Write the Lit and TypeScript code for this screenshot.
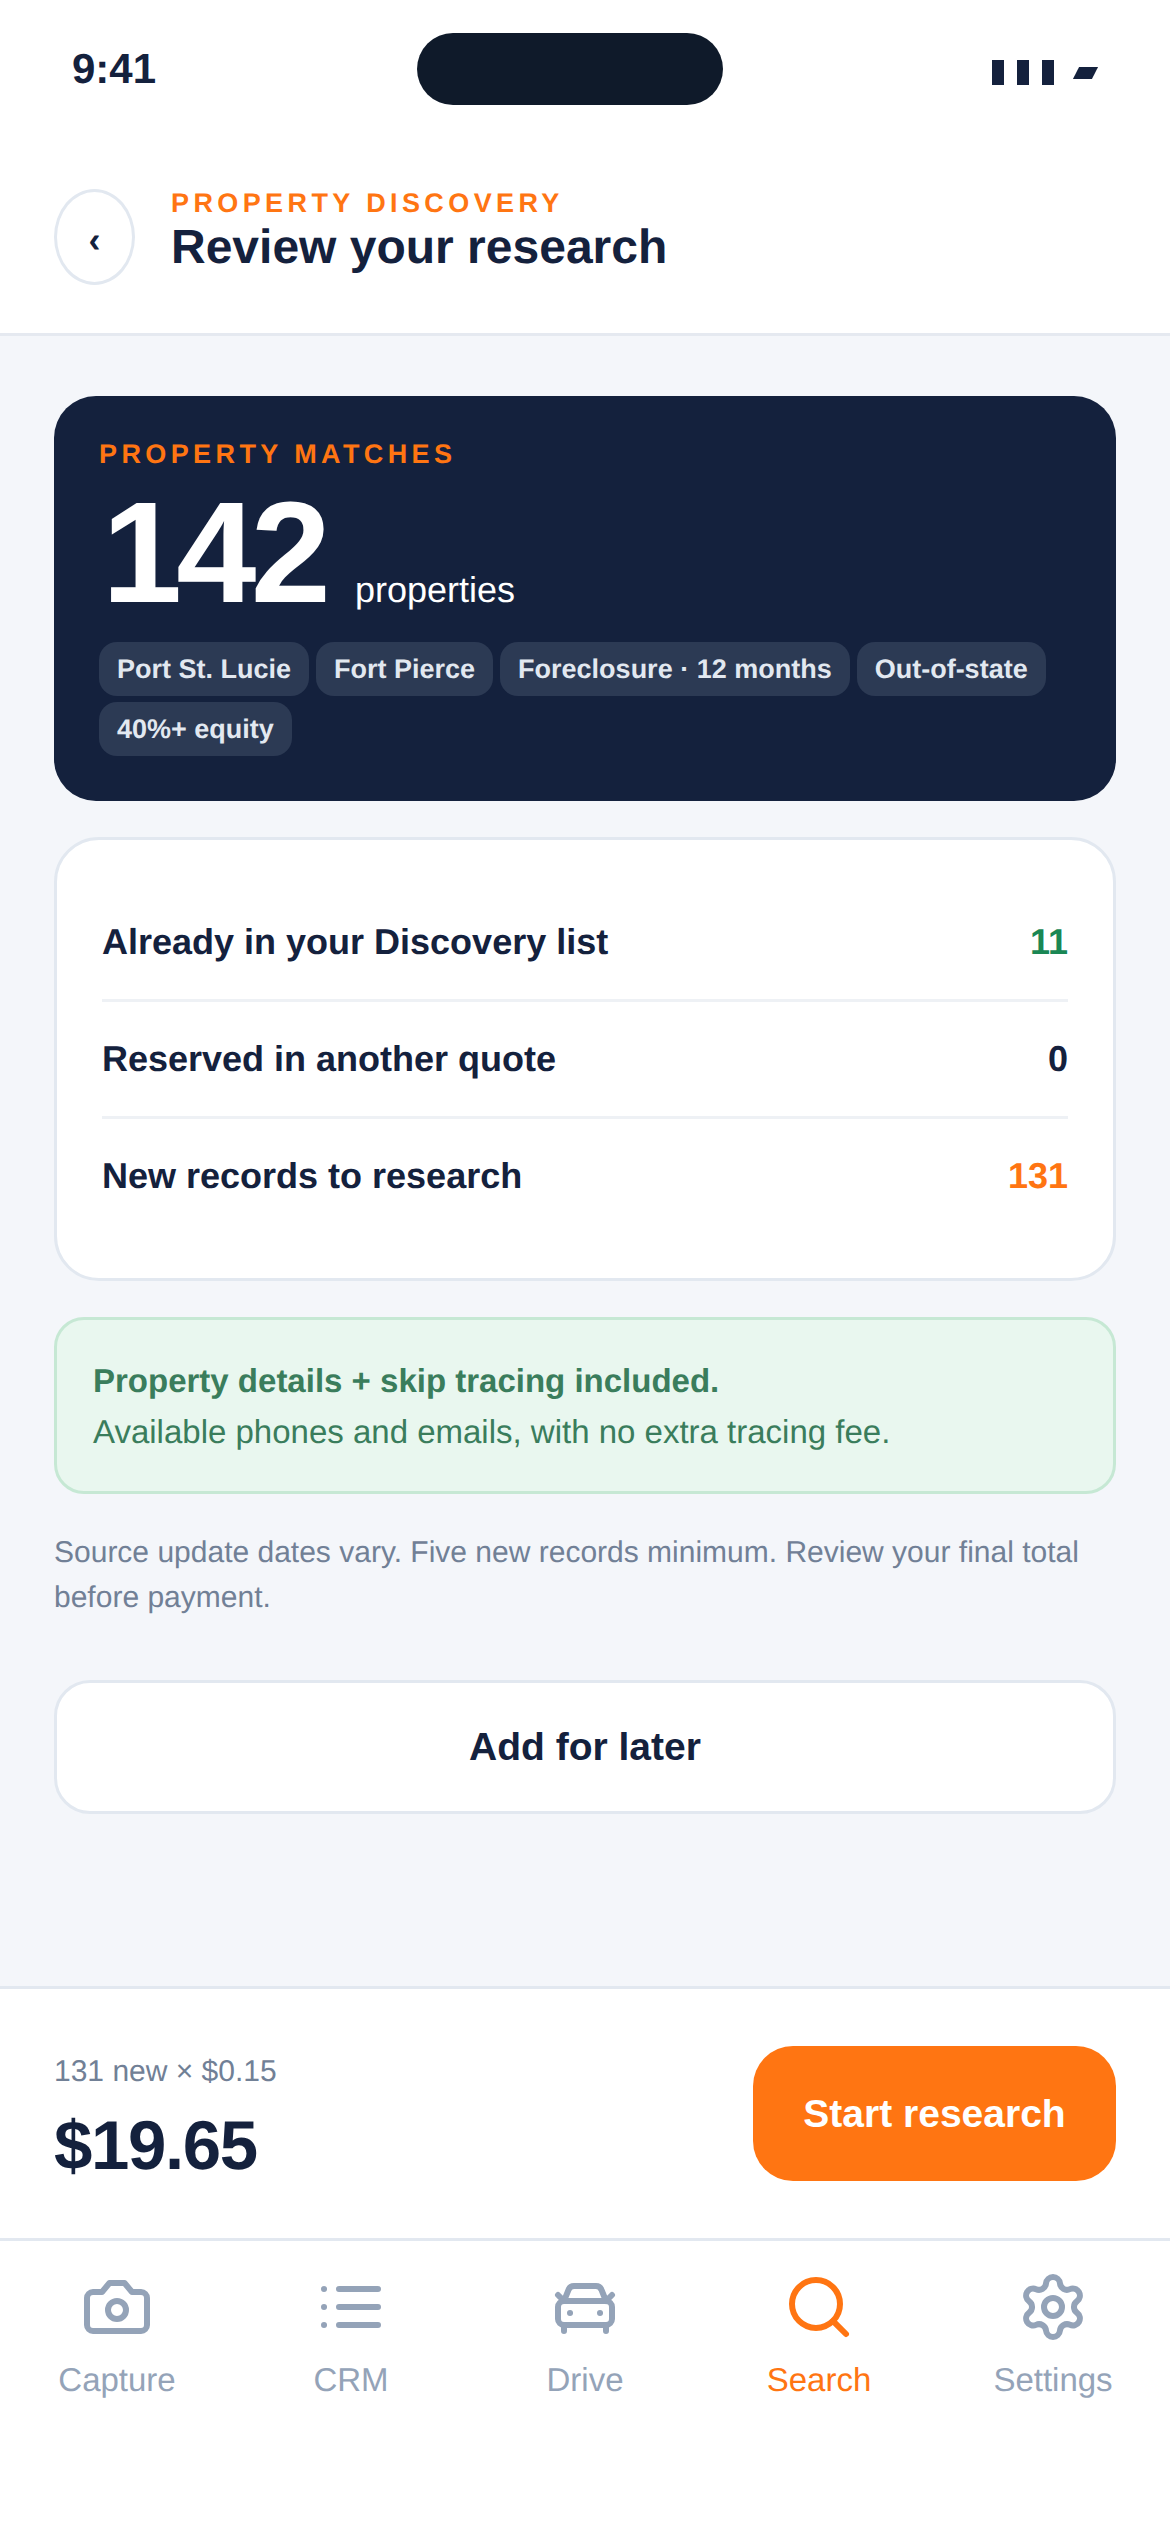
import { LitElement, html, css, svg } from 'lit';
import { customElement } from 'lit/decorators.js';

const chips = ['Port St. Lucie', 'Fort Pierce', 'Foreclosure · 12 months', 'Out-of-state', '40%+ equity'];

const stats = [
  { label: 'Already in your Discovery list', value: '11', tone: 'green' },
  { label: 'Reserved in another quote', value: '0', tone: '' },
  { label: 'New records to research', value: '131', tone: 'orange' },
];

const tabs = [
  {
    label: 'Capture',
    icon: svg`<path d="M14.5 4h-5L7 7H4a2 2 0 0 0-2 2v9a2 2 0 0 0 2 2h16a2 2 0 0 0 2-2V9a2 2 0 0 0-2-2h-3l-2.5-3z"/><circle cx="12" cy="13" r="3"/>`,
  },
  {
    label: 'CRM',
    icon: svg`<path d="M3 6h.01M8 6h13M3 12h.01M8 12h13M3 18h.01M8 18h13"/>`,
  },
  {
    label: 'Drive',
    icon: svg`<path d="m21 8-2 2-1.5-3.7A2 2 0 0 0 15.646 5H8.4a2 2 0 0 0-1.903 1.257L5 10 3 8"/><path d="M7 14h.01M17 14h.01"/><rect width="18" height="8" x="3" y="10" rx="2"/><path d="M5 18v2M19 18v2"/>`,
  },
  {
    label: 'Search',
    active: true,
    icon: svg`<circle cx="11" cy="11" r="8"/><path d="m21 21-4.3-4.3"/>`,
  },
  {
    label: 'Settings',
    icon: svg`<path d="M9.671 4.136a2.34 2.34 0 0 1 4.659 0 2.34 2.34 0 0 0 3.319 1.915 2.34 2.34 0 0 1 2.33 4.033 2.34 2.34 0 0 0 0 3.831 2.34 2.34 0 0 1-2.33 4.033 2.34 2.34 0 0 0-3.319 1.915 2.34 2.34 0 0 1-4.659 0 2.34 2.34 0 0 0-3.32-1.915 2.34 2.34 0 0 1-2.33-4.033 2.34 2.34 0 0 0 0-3.831A2.34 2.34 0 0 1 6.35 6.051a2.34 2.34 0 0 0 3.319-1.915"/><circle cx="12" cy="12" r="3"/>`,
  },
];

@customElement('app-root')
export class AppRoot extends LitElement {
  static styles = css`
    :host {
      display: block;
      font-family: 'Liberation Sans', Arial, sans-serif;
      color: #14213d;
      text-rendering: geometricPrecision;
    }

    .screen {
      display: flex;
      flex-direction: column;
      min-height: 2532px;
      background: #fff;
    }

    .status {
      height: 105px;
      padding: 33px 72px 0;
      box-sizing: border-box;
      display: flex;
      justify-content: space-between;
      align-items: flex-start;
    }

    .time {
      font-size: 42px;
      font-weight: 700;
      line-height: 72px;
    }

    .island {
      width: 306px;
      height: 72px;
      border-radius: 36px;
      background: #0f1a2a;
    }

    .signal {
      display: flex;
      align-items: center;
      justify-content: flex-end;
      gap: 13px;
      width: 111px;
      height: 79px;
      margin-right: 3px;
    }

    .signal i {
      width: 12px;
      height: 25px;
      background: #14213d;
    }

    .signal i.batt {
      width: 19px;
      height: 12px;
      margin-left: 9px;
      transform: skewX(-27deg);
    }

    .head {
      display: flex;
      align-items: center;
      gap: 36px;
      padding: 84px 54px 48px;
      height: 231px;
      box-sizing: border-box;
      border-bottom: 3px solid #e5e9f0;
    }

    .back {
      width: 81px;
      height: 96px;
      box-sizing: border-box;
      border: 3px solid #e2e8f0;
      border-radius: 50%;
      display: flex;
      align-items: center;
      justify-content: center;
      font-size: 36px;
      font-weight: 700;
      line-height: 1;
      padding-top: 6px;
      background: #fff;
    }

    .head-text {
      margin-bottom: 12px;
    }

    .eyebrow {
      font-size: 27px;
      font-weight: 700;
      letter-spacing: 4.4px;
      color: #ff7512;
      line-height: 33px;
    }

    .title {
      font-size: 48px;
      font-weight: 700;
      line-height: 54px;
      margin-top: 1px;
    }

    .main {
      flex: 1;
      background: #f4f6fa;
      padding: 60px 54px;
      display: flex;
      flex-direction: column;
      gap: 36px;
    }

    .hero {
      background: #14213d;
      border-radius: 42px;
      padding: 42px 45px 45px;
    }

    .count {
      display: flex;
      align-items: baseline;
      gap: 30px;
      color: #fff;
      margin: 16px 0 0 3px;
    }

    .num {
      font-size: 144px;
      font-weight: 700;
      line-height: 132px;
      letter-spacing: -5.76px;
    }

    .unit {
      font-size: 36px;
    }

    .chips {
      display: flex;
      flex-wrap: wrap;
      gap: 6px 7px;
      margin-top: 23px;
    }

    .chip {
      background: #2c3a54;
      color: #e2e8f0;
      font-size: 27px;
      font-weight: 700;
      line-height: 54px;
      padding: 0 18px;
      border-radius: 18px;
    }

    .card {
      background: #fff;
      border: 3px solid #e2e8f0;
      border-radius: 45px;
      padding: 45px;
    }

    .row {
      display: flex;
      justify-content: space-between;
      align-items: center;
      height: 114px;
      font-size: 36px;
      font-weight: 700;
    }

    .row + .row {
      border-top: 3px solid #eef1f5;
    }

    .green {
      color: #1a8754;
    }

    .orange {
      color: #ff7512;
    }

    .notice {
      background: #e9f7ef;
      border: 3px solid #c6e8d4;
      border-radius: 30px;
      padding: 35px 36px 34px;
      color: #3a7d5c;
      font-size: 33px;
      line-height: 51px;
    }

    .notice b {
      display: block;
    }

    .note {
      font-size: 30px;
      line-height: 45px;
      color: #718096;
    }

    .later {
      height: 134px;
      border: 3px solid #e2e8f0;
      border-radius: 36px;
      background: #fff;
      font: 700 39px 'Liberation Sans', Arial, sans-serif;
      color: #14213d;
      margin-top: 24px;
    }

    .checkout {
      display: flex;
      justify-content: space-between;
      align-items: center;
      height: 255px;
      box-sizing: border-box;
      padding: 0 54px;
      border-top: 3px solid #e2e8f0;
      border-bottom: 3px solid #e2e8f0;
    }

    .price {
      margin-top: 8px;
    }

    .per {
      font-size: 30px;
      line-height: 36px;
      color: #718096;
    }

    .total {
      font-size: 69px;
      font-weight: 700;
      line-height: 72px;
      letter-spacing: -1.38px;
      margin-top: 20px;
    }

    .start {
      width: 363px;
      height: 135px;
      border: 0;
      border-radius: 40px;
      background: #ff7512;
      color: #fff;
      font: 700 39px 'Liberation Sans', Arial, sans-serif;
    }

    .tabs {
      display: grid;
      grid-template-columns: repeat(5, 1fr);
      height: 291px;
      padding-top: 30px;
      box-sizing: border-box;
    }

    .tab {
      display: flex;
      flex-direction: column;
      align-items: center;
      gap: 18px;
      color: #94a3b8;
      font-size: 33px;
    }

    .tab.active {
      color: #ff7512;
    }

    .tab svg {
      width: 72px;
      height: 72px;
      fill: none;
      stroke: currentColor;
      stroke-width: 2;
      stroke-linecap: round;
      stroke-linejoin: round;
    }
  `;

  render() {
    return html`
      <div class="screen">
        <div class="status">
          <span class="time">9:41</span>
          <div class="island"></div>
          <div class="signal"><i></i><i></i><i></i><i class="batt"></i></div>
        </div>

        <header class="head">
          <div class="back">‹</div>
          <div class="head-text">
            <div class="eyebrow">PROPERTY DISCOVERY</div>
            <div class="title">Review your research</div>
          </div>
        </header>

        <main class="main">
          <section class="hero">
            <div class="eyebrow">PROPERTY MATCHES</div>
            <div class="count"><span class="num">142</span><span class="unit">properties</span></div>
            <div class="chips">${chips.map((c) => html`<span class="chip">${c}</span>`)}</div>
          </section>

          <section class="card">
            ${stats.map(
              (s) => html`<div class="row"><span>${s.label}</span><span class=${s.tone}>${s.value}</span></div>`
            )}
          </section>

          <section class="notice">
            <b>Property details + skip tracing included.</b>
            Available phones and emails, with no extra tracing fee.
          </section>

          <div class="note">Source update dates vary. Five new records minimum. Review your final total before payment.</div>

          <button class="later">Add for later</button>
        </main>

        <section class="checkout">
          <div class="price">
            <div class="per">131 new × $0.15</div>
            <div class="total">$19.65</div>
          </div>
          <button class="start">Start research</button>
        </section>

        <nav class="tabs">
          ${tabs.map(
            (t) => html`<div class="tab ${t.active ? 'active' : ''}">
              <svg viewBox="0 0 24 24">${t.icon}</svg>
              <span>${t.label}</span>
            </div>`
          )}
        </nav>
      </div>
    `;
  }
}
